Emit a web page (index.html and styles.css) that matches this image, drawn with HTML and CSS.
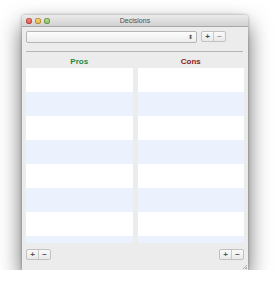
FILE: index.html
```html
<!DOCTYPE html>
<html lang="en">
<head>
  <meta charset="UTF-8" />
  <title>Decisions</title>
  <link rel="stylesheet" href="styles.css">
</head>
<body>
  <div class="window">
    <div class="titlebar">
      <div class="lights">
        <span class="light red"></span>
        <span class="light yellow"></span>
        <span class="light green"></span>
      </div>
      <div class="title">Decisions</div>
    </div>

    <div class="content">
      <div class="toolbar">
        <div class="popup"><span class="arrows">⬍</span></div>
        <div class="segment">
          <span class="seg">+</span><span class="seg dim">−</span>
        </div>
      </div>

      <div class="separator"></div>

      <div class="columns">
        <div class="column">
          <div class="heading pros">Pros</div>
          <div class="table">
            <div class="row"></div><div class="row"></div><div class="row"></div><div class="row"></div>
            <div class="row"></div><div class="row"></div><div class="row"></div><div class="row"></div>
          </div>
        </div>
        <div class="column">
          <div class="heading cons">Cons</div>
          <div class="table">
            <div class="row"></div><div class="row"></div><div class="row"></div><div class="row"></div>
            <div class="row"></div><div class="row"></div><div class="row"></div><div class="row"></div>
          </div>
        </div>
      </div>

      <div class="footer">
        <div class="segment small">
          <span class="seg">+</span><span class="seg">−</span>
        </div>
        <div class="segment small">
          <span class="seg">+</span><span class="seg">−</span>
        </div>
      </div>
    </div>
    <div class="grip"></div>
  </div>
</body>
</html>
```

FILE: styles.css
```css
body {
  margin: 0;
  background: #fff;
  font-family: 'Liberation Sans', Arial, sans-serif;
}
.window {
  margin: 15px 0 0 22px;
  width: 226px;
  height: 255px;
  background: #ececec;
  box-shadow: 0 10px 22px rgba(0, 0, 0, 0.6), 0 0 3px rgba(0, 0, 0, 0.35);
  border-radius: 3px 3px 0 0;
  position: relative;
  overflow: hidden;
}
.titlebar {
  height: 11px;
  background: linear-gradient(#ebebeb, #d2d2d2);
  border-bottom: 1px solid #a8a8a8;
  position: relative;
  display: flex;
  align-items: center;
}
.lights {
  display: flex;
  gap: 3px;
  padding-left: 4px;
}
.light {
  width: 6px;
  height: 6px;
  border-radius: 50%;
  box-shadow: inset 0 0 0 0.5px rgba(0, 0, 0, 0.35);
}
.light.red { background: radial-gradient(circle at 50% 35%, #f7847c, #d9362c); }
.light.yellow { background: radial-gradient(circle at 50% 35%, #f9d37a, #dc9a1c); }
.light.green { background: radial-gradient(circle at 50% 35%, #b3de8a, #6aa83c); }
.title {
  position: absolute;
  left: 0;
  right: 0;
  top: 0;
  text-align: center;
  font-size: 7px;
  line-height: 11px;
  color: #4d4d4d;
}
.content {
  padding: 4px 4px 0 4px;
}
.toolbar {
  display: flex;
  align-items: center;
  gap: 4px;
  height: 11px;
}
.popup {
  width: 169px;
  height: 10px;
  border: 1px solid #b6b6b6;
  border-radius: 2px;
  background: linear-gradient(#fdfdfd, #ececec);
  position: relative;
}
.popup .arrows {
  position: absolute;
  right: 3px;
  top: 0;
  font-size: 6px;
  line-height: 10px;
  color: #555;
}
.segment {
  display: flex;
  border: 1px solid #c2c2c2;
  border-radius: 2px;
  background: linear-gradient(#fafafa, #e9e9e9);
  height: 9px;
}
.seg {
  width: 11px;
  text-align: center;
  font-size: 8px;
  line-height: 9px;
  font-weight: bold;
  color: #444;
}
.seg + .seg {
  border-left: 1px solid #c8c8c8;
}
.seg.dim {
  color: #9a9a9a;
}
.separator {
  height: 1px;
  background: #b5b5b5;
  margin: 9px 1px 0 0;
}
.columns {
  display: flex;
  gap: 5px;
  margin-top: 4px;
}
.column {
  flex: 1;
}
.heading {
  text-align: center;
  font-size: 8px;
  font-weight: bold;
  line-height: 12px;
}
.heading.pros { color: #1d8a45; }
.heading.cons { color: #8c1a1a; }
.table {
  height: 175px;
  overflow: hidden;
  background: #fff;
}
.row {
  height: 24px;
}
.row:nth-child(even) {
  background: #ecf2fd;
}
.footer {
  display: flex;
  justify-content: space-between;
  margin-top: 6px;
}
.segment.small .seg {
  color: #555;
}
.grip {
  position: absolute;
  right: 1px;
  bottom: 1px;
  width: 6px;
  height: 6px;
  background: repeating-linear-gradient(135deg, transparent 0 1px, #b0b0b0 1px 2px);
  clip-path: polygon(100% 0, 100% 100%, 0 100%);
}
```
